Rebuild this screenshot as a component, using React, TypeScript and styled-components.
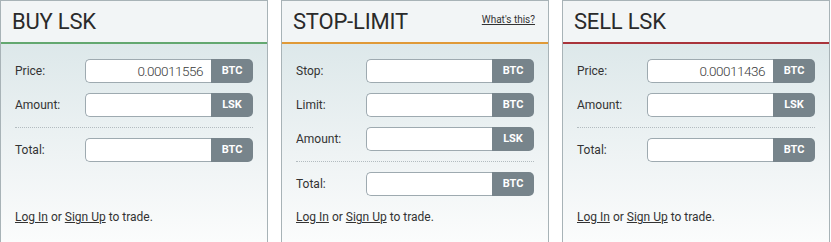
import React from "react";
import styled, { createGlobalStyle } from "styled-components";

const Global = createGlobalStyle`
  html, body { margin: 0; padding: 0; background: #ffffff; overflow: hidden; }
  body { font-family: Roboto, "Liberation Sans", Arial, sans-serif; color: #333; }
`;

const Page = styled.div`
  display: flex;
  gap: 13px;
  width: 831px;
  height: 242px;
  overflow: hidden;
`;

const Panel = styled.section`
  width: 268px;
  flex: none;
  box-sizing: border-box;
  border: 1px solid #a8b3b7;
  border-bottom: none;
  display: flex;
  flex-direction: column;
`;

const Header = styled.header<{ $accent: string }>`
  height: 41px;
  box-sizing: content-box;
  background: #f2f5f6;
  border-bottom: 2px solid ${(p) => p.$accent};
  display: flex;
  align-items: center;
  justify-content: space-between;
  padding: 0 13px 0 11px;
`;

const Title = styled.h2`
  margin: 2px 0 0 0;
  font-size: 22px;
  font-weight: 400;
  color: #2a2a2a;
  line-height: 26px;
  letter-spacing: -0.2px;
`;

const Help = styled.a`
  font-size: 10px;
  color: #333;
  text-decoration: underline;
  margin-top: -3px;
`;

const Body = styled.div`
  height: 199px;
  box-sizing: border-box;
  padding: 15px 14px 17px 14px;
  background: linear-gradient(#dde8ea 0%, #eef3f4 55%, #fbfcfc 100%);
  display: flex;
  flex-direction: column;
`;

const Row = styled.div`
  display: flex;
  align-items: center;
  height: 24px;
  & + & { margin-top: 10px; }
`;

const Label = styled.label`
  width: 70px;
  font-size: 12px;
  color: #333;
`;

const InputGroup = styled.div`
  display: flex;
  width: 168px;
  height: 24px;
`;

const Field = styled.div`
  flex: 1;
  box-sizing: border-box;
  background: #fff;
  border: 1px solid #9eaab0;
  border-right: none;
  border-radius: 5px 0 0 5px;
  font-size: 13.5px;
  font-weight: 300;
  letter-spacing: -0.5px;
  color: #3a3a3a;
  text-align: right;
  padding-right: 8px;
  line-height: 22px;
`;

const Unit = styled.span`
  width: 42px;
  background: #77848b;
  color: #fff;
  font-size: 11px;
  font-weight: 700;
  border-radius: 0 5px 5px 0;
  display: flex;
  align-items: center;
  justify-content: center;
`;

const Divider = styled.hr`
  margin: 10px 0 10px 0;
  border: none;
  border-top: 1px dotted #b3bcc0;
  width: 238px;
`;

const Login = styled.p`
  margin: auto 0 0 0;
  font-size: 12px;
  line-height: 16px;
  color: #333;
  a { color: #333; text-decoration: underline; }
`;

type FieldDef = { label: string; value?: string; unit: string };

type PanelDef = {
  title: string;
  accent: string;
  help?: boolean;
  fields: FieldDef[];
  total: FieldDef;
};

const panels: PanelDef[] = [
  {
    title: "BUY LSK",
    accent: "#63a870",
    fields: [
      { label: "Price:", value: "0.00011556", unit: "BTC" },
      { label: "Amount:", unit: "LSK" },
    ],
    total: { label: "Total:", unit: "BTC" },
  },
  {
    title: "STOP-LIMIT",
    accent: "#e09a38",
    help: true,
    fields: [
      { label: "Stop:", unit: "BTC" },
      { label: "Limit:", unit: "BTC" },
      { label: "Amount:", unit: "LSK" },
    ],
    total: { label: "Total:", unit: "BTC" },
  },
  {
    title: "SELL LSK",
    accent: "#a9343b",
    fields: [
      { label: "Price:", value: "0.00011436", unit: "BTC" },
      { label: "Amount:", unit: "LSK" },
    ],
    total: { label: "Total:", unit: "BTC" },
  },
];

const FieldRow = ({ f }: { f: FieldDef }) => (
  <Row>
    <Label>{f.label}</Label>
    <InputGroup>
      <Field>{f.value ?? ""}</Field>
      <Unit>{f.unit}</Unit>
    </InputGroup>
  </Row>
);

export default function App() {
  return (
    <>
      <Global />
      <Page>
        {panels.map((p) => (
          <Panel key={p.title}>
            <Header $accent={p.accent}>
              <Title>{p.title}</Title>
              {p.help && <Help href="#">What's this?</Help>}
            </Header>
            <Body>
              {p.fields.map((f) => (
                <FieldRow key={f.label} f={f} />
              ))}
              <Divider />
              <FieldRow f={p.total} />
              <Login>
                <a href="#">Log In</a> or <a href="#">Sign Up</a> to trade.
              </Login>
            </Body>
          </Panel>
        ))}
      </Page>
    </>
  );
}
